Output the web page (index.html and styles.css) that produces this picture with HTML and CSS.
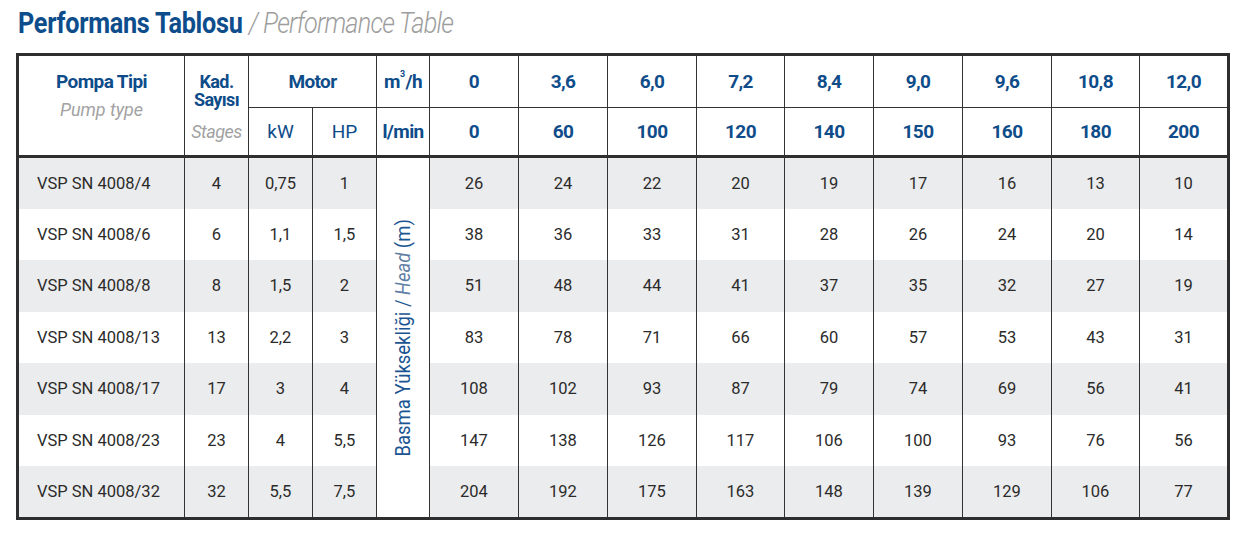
FILE: index.html
```html
<!DOCTYPE html>
<html lang="tr">
<head>
<meta charset="utf-8">
<title>Performans Tablosu</title>
<link rel="stylesheet" href="styles.css">
</head>
<body>
<h1 class="title"><span class="title-inner"><span class="title-tr">Performans Tablosu</span> <span class="title-en">/ Performance Table</span></span></h1>
<div class="ptable">
  <div class="cell hd rows2 c-type"><span class="b">Pompa Tipi</span><span class="it">Pump type</span></div>
  <div class="cell hd rows2 c-stage"><span class="b kad">Kad.</span><span class="b kad">Sayısı</span><span class="it stages">Stages</span></div>
  <div class="cell hd r1 cols2 b">Motor</div>
  <div class="cell hd r1 b">m<span class="sup">3</span>/h</div>
  <div class="cell hd r1 b">0</div>
  <div class="cell hd r1 b">3,6</div>
  <div class="cell hd r1 b">6,0</div>
  <div class="cell hd r1 b">7,2</div>
  <div class="cell hd r1 b">8,4</div>
  <div class="cell hd r1 b">9,0</div>
  <div class="cell hd r1 b">9,6</div>
  <div class="cell hd r1 b">10,8</div>
  <div class="cell hd r1 b last">12,0</div>

  <div class="cell hd r2 reg">kW</div>
  <div class="cell hd r2 reg">HP</div>
  <div class="cell hd r2 b">l/min</div>
  <div class="cell hd r2 b">0</div>
  <div class="cell hd r2 b">60</div>
  <div class="cell hd r2 b">100</div>
  <div class="cell hd r2 b">120</div>
  <div class="cell hd r2 b">140</div>
  <div class="cell hd r2 b">150</div>
  <div class="cell hd r2 b">160</div>
  <div class="cell hd r2 b">180</div>
  <div class="cell hd r2 b last">200</div>

  <div class="cell g name">VSP SN 4008/4</div><div class="cell g">4</div><div class="cell g">0,75</div><div class="cell g">1</div>
  <div class="cell vcell"><span class="vtext">Basma Yüksekliği / <i class="head">Head</i> (m)</span></div>
  <div class="cell g">26</div><div class="cell g">24</div><div class="cell g">22</div><div class="cell g">20</div><div class="cell g">19</div><div class="cell g">17</div><div class="cell g">16</div><div class="cell g">13</div><div class="cell g last">10</div>

  <div class="cell name">VSP SN 4008/6</div><div class="cell">6</div><div class="cell">1,1</div><div class="cell">1,5</div>
  <div class="cell">38</div><div class="cell">36</div><div class="cell">33</div><div class="cell">31</div><div class="cell">28</div><div class="cell">26</div><div class="cell">24</div><div class="cell">20</div><div class="cell last">14</div>

  <div class="cell g name">VSP SN 4008/8</div><div class="cell g">8</div><div class="cell g">1,5</div><div class="cell g">2</div>
  <div class="cell g">51</div><div class="cell g">48</div><div class="cell g">44</div><div class="cell g">41</div><div class="cell g">37</div><div class="cell g">35</div><div class="cell g">32</div><div class="cell g">27</div><div class="cell g last">19</div>

  <div class="cell name">VSP SN 4008/13</div><div class="cell">13</div><div class="cell">2,2</div><div class="cell">3</div>
  <div class="cell">83</div><div class="cell">78</div><div class="cell">71</div><div class="cell">66</div><div class="cell">60</div><div class="cell">57</div><div class="cell">53</div><div class="cell">43</div><div class="cell last">31</div>

  <div class="cell g name">VSP SN 4008/17</div><div class="cell g">17</div><div class="cell g">3</div><div class="cell g">4</div>
  <div class="cell g">108</div><div class="cell g">102</div><div class="cell g">93</div><div class="cell g">87</div><div class="cell g">79</div><div class="cell g">74</div><div class="cell g">69</div><div class="cell g">56</div><div class="cell g last">41</div>

  <div class="cell name">VSP SN 4008/23</div><div class="cell">23</div><div class="cell">4</div><div class="cell">5,5</div>
  <div class="cell">147</div><div class="cell">138</div><div class="cell">126</div><div class="cell">117</div><div class="cell">106</div><div class="cell">100</div><div class="cell">93</div><div class="cell">76</div><div class="cell last">56</div>

  <div class="cell g name">VSP SN 4008/32</div><div class="cell g">32</div><div class="cell g">5,5</div><div class="cell g">7,5</div>
  <div class="cell g">204</div><div class="cell g">192</div><div class="cell g">175</div><div class="cell g">163</div><div class="cell g">148</div><div class="cell g">139</div><div class="cell g">129</div><div class="cell g">106</div><div class="cell g last">77</div>
</div>
</body>
</html>
```
FILE: styles.css
```css
html, body {
  margin: 0;
  padding: 0;
  background: #ffffff;
}

body {
  font-family: Roboto, "Liberation Sans", sans-serif;
  color: #2b2b2b;
}

.title {
  box-sizing: border-box;
  height: 53px;
  margin: 0;
  padding: 7px 0 0 18px;
  font-size: 29px;
  line-height: 32px;
  font-weight: 400;
  white-space: nowrap;
}

.title-inner {
  display: inline-block;
  transform: scaleX(0.87);
  transform-origin: 0 50%;
}

.title-tr {
  color: #0d4d8c;
  font-weight: 700;
  letter-spacing: -0.3px;
}

.title-en {
  color: #9d9d9d;
  font-weight: 300;
  font-style: italic;
  letter-spacing: -0.9px;
}

.ptable {
  display: grid;
  grid-template-columns: 166px 64px 64px 64px 53px 89px 89px 89px 88px 89px 89px 89px 88px 87px;
  grid-template-rows: 52px 50px 51px 51px 52px 51px 52px 51px 51px;
  width: max-content;
  margin-left: 16px;
  border: 3px solid #2e2e2e;
}

.cell {
  box-sizing: border-box;
  border-right: 1px solid #333333;
  display: flex;
  align-items: center;
  justify-content: center;
  font-size: 16.5px;
  line-height: 20px;
  white-space: nowrap;
}

.cell.last {
  border-right: none;
}

.g {
  background: #ebeced;
}

.name {
  justify-content: flex-start;
  padding-left: 18px;
}

.hd {
  color: #0e4c8a;
  font-size: 19px;
  background: #ffffff;
}

.r1 {
  border-bottom: 1px solid #333333;
}

.r2 {
  border-bottom: 3px solid #2e2e2e;
}

.rows2 {
  grid-row: span 2;
  border-bottom: 3px solid #2e2e2e;
  flex-direction: column;
  justify-content: flex-start;
}

.cols2 {
  grid-column: span 2;
}

.b {
  font-weight: 700;
  letter-spacing: -0.6px;
}

.reg {
  font-weight: 400;
}

.it {
  font-style: italic;
  font-weight: 400;
  color: #a2a2a2;
  font-size: 18px;
  line-height: 28px;
}

.c-type {
  padding-top: 12px;
  line-height: 28px;
}

.c-type .b {
  display: block;
  line-height: 28px;
}

.c-stage {
  padding-top: 17px;
}

.kad {
  display: block;
  height: 18px;
  text-align: center;
  font-size: 18px;
  line-height: 18px;
}

.stages {
  display: block;
  margin-top: 9px;
  letter-spacing: -0.5px;
}

.sup {
  font-size: 9px;
  position: relative;
  top: -8px;
  margin: 0 1px 0 0;
}

.vcell {
  grid-row: span 7;
  background: #ffffff;
}

.vtext {
  display: block;
  writing-mode: vertical-rl;
  transform: rotate(180deg) scaleY(0.88);
  font-size: 21px;
  font-weight: 400;
  color: #1a5592;
  line-height: 21px;
}

.head {
  color: #5f7fa6;
  font-style: italic;
}
```
